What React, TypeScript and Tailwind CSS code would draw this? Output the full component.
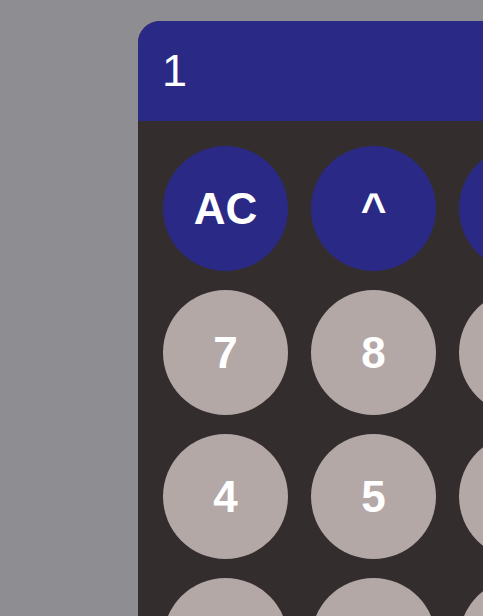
import React from 'react';

const keys = [
  { label: 'AC', kind: 'op' },
  { label: '^', kind: 'op' },
  { label: '%', kind: 'op' },
  { label: '÷', kind: 'op' },
  { label: '7', kind: 'num' },
  { label: '8', kind: 'num' },
  { label: '9', kind: 'num' },
  { label: '×', kind: 'op' },
  { label: '4', kind: 'num' },
  { label: '5', kind: 'num' },
  { label: '6', kind: 'num' },
  { label: '−', kind: 'op' },
  { label: '1', kind: 'num' },
  { label: '2', kind: 'num' },
  { label: '3', kind: 'num' },
  { label: '+', kind: 'op' },
];

export default function App() {
  return (
    <div className="w-full h-[616px] overflow-hidden bg-[#8e8d92] pl-[138px] pt-[21px] font-['Liberation_Sans',Arial,sans-serif]">
      <div className="w-[619px] rounded-tl-[22px] rounded-tr-[22px] overflow-hidden bg-[#332e2d]">
        {/* display */}
        <div className="h-[100px] bg-[#2a2a86] flex items-center pl-6 text-white text-[45px]">
          1
        </div>
        {/* keypad */}
        <div className="grid grid-cols-[repeat(4,125px)] gap-x-[23px] gap-y-[19px] p-[25px]">
          {keys.map((k) => (
            <button
              key={k.label}
              className={`w-[125px] h-[125px] rounded-full flex items-center justify-center text-white font-bold text-[44px] ${
                k.kind === 'op' ? 'bg-[#2a2a86]' : 'bg-[#b4a8a7]'
              }`}
            >
              {k.label}
            </button>
          ))}
        </div>
      </div>
    </div>
  );
}
